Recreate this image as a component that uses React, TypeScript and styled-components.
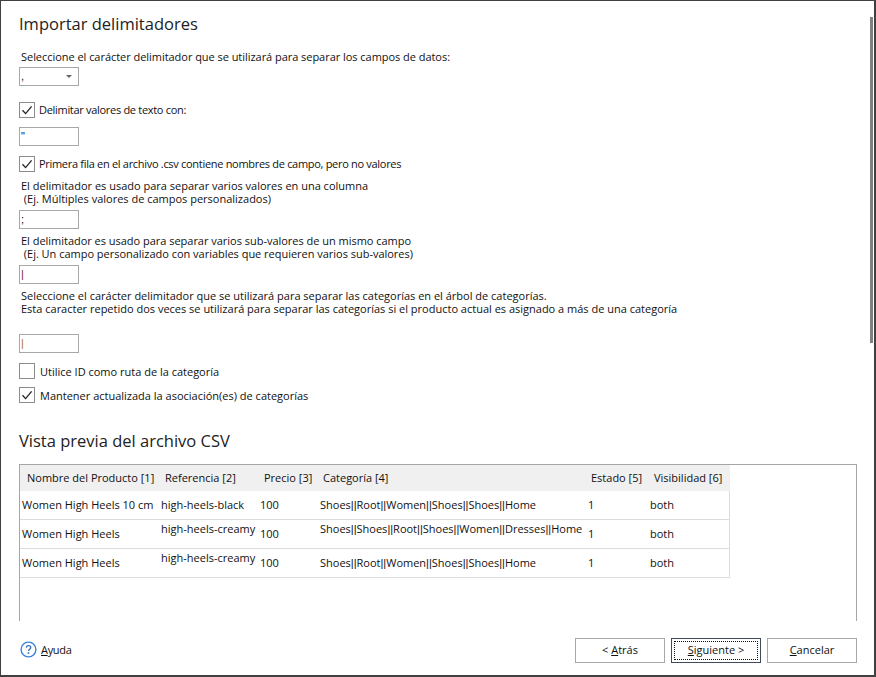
import React from 'react'
import styled, { createGlobalStyle } from 'styled-components'

const GlobalStyle = createGlobalStyle`
  html, body {
    margin: 0;
    padding: 0;
    background: #fff;
  }
  * {
    box-sizing: border-box;
  }
`

const Window = styled.div`
  position: relative;
  display: flex;
  flex-direction: column;
  width: 876px;
  height: 677px;
  overflow: hidden;
  background: #fff;
  border: 1px solid #404040;
  border-bottom-width: 2px;
  border-right-width: 2px;
  color: #111;
  font-family: "Open Sans", "Noto Sans", sans-serif;
  font-size: 11px;
`

const Content = styled.div`
  display: flex;
  flex-direction: column;
  flex: 1;
  padding: 10px 17px 0 18px;
`

const Title = styled.h1<{ $top?: number }>`
  margin: ${p => p.$top ?? 0}px 0 0 0;
  height: 26px;
  font-size: 16.5px;
  line-height: 26px;
  font-weight: 400;
  color: #222;
`

const Hint = styled.div<{ $top: number; $height?: number; $squeeze?: number }>`
  margin-top: ${p => p.$top}px;
  padding-left: 2px;
  line-height: 13px;
  min-height: ${p => p.$height ?? 13}px;
  white-space: pre;
  letter-spacing: ${p => p.$squeeze ?? 0}px;
`

const FieldBox = styled.div<{ $top: number }>`
  position: relative;
  width: 60px;
  height: 19px;
  margin-top: ${p => p.$top}px;
  padding-left: 1px;
  border: 1px solid #a8a8a8;
  font-family: "Liberation Sans", sans-serif;
  font-size: 11px;
  line-height: 17px;
  color: ${p => p.color ?? '#111'};
`

const Caret = styled.span`
  position: absolute;
  top: 7px;
  right: 6px;
  border-left: 3px solid transparent;
  border-right: 3px solid transparent;
  border-top: 3px solid #666;
`

const CheckRow = styled.div<{ $top: number; $gap?: number }>`
  display: flex;
  align-items: center;
  gap: ${p => p.$gap ?? 4}px;
  height: 16px;
  margin-top: ${p => p.$top}px;
`

const Box = styled.span`
  display: flex;
  align-items: center;
  justify-content: center;
  width: 16px;
  height: 16px;
  border: 1px solid #8c8c8c;
  background: #fff;
`

const TightLabel = styled.span`
  margin-top: -2px;
  letter-spacing: -0.3px;
`

const Preview = styled.div`
  height: 157px;
  margin-top: 10px;
  border: 1px solid #a6a6a6;
  border-bottom: none;
`

const Table = styled.div`
  display: flex;
  flex-direction: column;
  width: 710px;
`

const Row = styled.div<{ $header?: boolean }>`
  display: grid;
  grid-template-columns: 138px 99px 59px 268px 63px 83px;
  height: ${p => (p.$header ? 26 : 29)}px;
  background: ${p => (p.$header ? '#f0f0f0' : '#fff')};
  border-bottom: ${p => (p.$header ? 'none' : '1px solid #dcdcdc')};
  border-right: ${p => (p.$header ? 'none' : '1px solid #dcdcdc')};
`

const HeadCell = styled.div`
  padding-left: 7px;
  line-height: 26px;
  white-space: nowrap;
`

const Cell = styled.div<{ $up?: boolean; $left?: number }>`
  padding: ${p => (p.$up ? 1 : 6)}px 0 0 ${p => p.$left ?? 3}px;
  line-height: 15px;
  white-space: nowrap;
`

const Pipes = styled.span`
  font-family: "Liberation Sans", sans-serif;
`

const Footer = styled.div`
  display: flex;
  align-items: center;
  justify-content: space-between;
  height: 25px;
  margin: 17px 17px 12px 18px;
`

const Help = styled.div`
  display: flex;
  align-items: center;
  gap: 4px;
  padding-left: 1px;
  padding-bottom: 2px;
  letter-spacing: -0.3px;
`

const Buttons = styled.div`
  display: flex;
  gap: 6px;
`

const Button = styled.button<{ $active?: boolean }>`
  position: relative;
  width: 90px;
  height: 25px;
  padding: 0 0 2px 0;
  background: #fff;
  border: 1px solid ${p => (p.$active ? '#3f4a5c' : '#a8a8a8')};
  color: #111;
  font-family: inherit;
  font-size: 11px;
  &::after {
    content: '';
    display: ${p => (p.$active ? 'block' : 'none')};
    position: absolute;
    inset: 2px;
    border: 1px dotted #111;
  }
`

const Key = styled.span`
  text-decoration: underline;
`

const ScrollThumb = styled.div`
  position: absolute;
  top: 16px;
  right: 1px;
  width: 3px;
  height: 326px;
  background: #808080;
`

const Check = () => (
  <svg width="12" height="12" viewBox="0 0 12 12" fill="none">
    <path d="M1.5 6.2 L4.6 9.6 L10.6 2.4" stroke="#222" strokeWidth="1.3" />
  </svg>
)

const HelpIcon = () => (
  <svg width="17" height="17" viewBox="0 0 17 17" fill="none">
    <circle cx="8.5" cy="8.5" r="7.4" stroke="#3b82e0" strokeWidth="1.4" />
    <path d="M6.3 6.6 C6.4 3.9 10.7 4 10.7 6.5 C10.7 8.2 8.5 8.2 8.5 10" stroke="#3b6fb5" strokeWidth="1.4" />
    <rect x="7.7" y="11.2" width="1.6" height="1.6" fill="#3b6fb5" />
  </svg>
)

function Category({ path }: { path: string }) {
  const parts = path.split('||')
  return (
    <>
      {parts.map((part, i) => (
        <React.Fragment key={i}>
          {i > 0 && <Pipes>||</Pipes>}
          {part}
        </React.Fragment>
      ))}
    </>
  )
}

const HEADERS = ['Nombre del Producto [1]', 'Referencia [2]', 'Precio [3]', 'Categoría [4]', 'Estado [5]', 'Visibilidad [6]']

const ROWS = [
  { name: 'Women High Heels 10 cm', ref: 'high-heels-black', refUp: false, cat: 'Shoes||Root||Women||Shoes||Shoes||Home', catUp: false },
  { name: 'Women High Heels', ref: 'high-heels-creamy', refUp: true, cat: 'Shoes||Shoes||Root||Shoes||Women||Dresses||Home', catUp: true },
  { name: 'Women High Heels', ref: 'high-heels-creamy', refUp: true, cat: 'Shoes||Root||Women||Shoes||Shoes||Home', catUp: false },
]

export default function App() {
  return (
    <Window>
      <GlobalStyle />
      <Content>
        <Title>Importar delimitadores</Title>
        <Hint $top={13} $squeeze={-0.04}>Seleccione el carácter delimitador que se utilizará para separar los campos de datos:</Hint>
        <FieldBox $top={4}>,<Caret /></FieldBox>
        <CheckRow $top={16}><Box><Check /></Box><TightLabel>Delimitar valores de texto con:</TightLabel></CheckRow>
        <FieldBox $top={9}>"</FieldBox>
        <CheckRow $top={10}><Box><Check /></Box><TightLabel>Primera fila en el archivo .csv contiene nombres de campo, pero no valores</TightLabel></CheckRow>
        <Hint $top={7}>{'El delimitador es usado para separar varios valores en una columna\n (Ej. Múltiples valores de campos personalizados)'}</Hint>
        <FieldBox $top={5}>;</FieldBox>
        <Hint $top={5} $squeeze={-0.02}>{'El delimitador es usado para separar varios sub-valores de un mismo campo\n (Ej. Un campo personalizado con variables que requieren varios sub-valores)'}</Hint>
        <FieldBox $top={5} color="#7a1f3a">|</FieldBox>
        <Hint $top={5} $height={39}>{'Seleccione el carácter delimitador que se utilizará para separar las categorías en el árbol de categorías.\nEsta caracter repetido dos veces se utilizará para separar las categorías si el producto actual es asignado a más de una categoría'}</Hint>
        <FieldBox $top={6} color="#b8701c">|</FieldBox>
        <CheckRow $top={10} $gap={5}><Box />Utilice ID como ruta de la categoría</CheckRow>
        <CheckRow $top={8} $gap={5}><Box><Check /></Box>Mantener actualizada la asociación(es) de categorías</CheckRow>
        <Title $top={25}>Vista previa del archivo CSV</Title>
        <Preview>
          <Table>
            <Row $header>
              {HEADERS.map(h => <HeadCell key={h}>{h}</HeadCell>)}
            </Row>
            {ROWS.map((r, i) => (
              <Row key={i}>
                <Cell $left={2}>{r.name}</Cell>
                <Cell $up={r.refUp}>{r.ref}</Cell>
                <Cell>100</Cell>
                <Cell $up={r.catUp} $left={4}><Category path={r.cat} /></Cell>
                <Cell $left={4}>1</Cell>
                <Cell>both</Cell>
              </Row>
            ))}
          </Table>
        </Preview>
      </Content>
      <Footer>
        <Help><HelpIcon /><span><Key>A</Key>yuda</span></Help>
        <Buttons>
          <Button>{'< '}<Key>A</Key>trás</Button>
          <Button $active><Key>S</Key>iguiente {'>'}</Button>
          <Button><Key>C</Key>ancelar</Button>
        </Buttons>
      </Footer>
      <ScrollThumb />
    </Window>
  )
}
